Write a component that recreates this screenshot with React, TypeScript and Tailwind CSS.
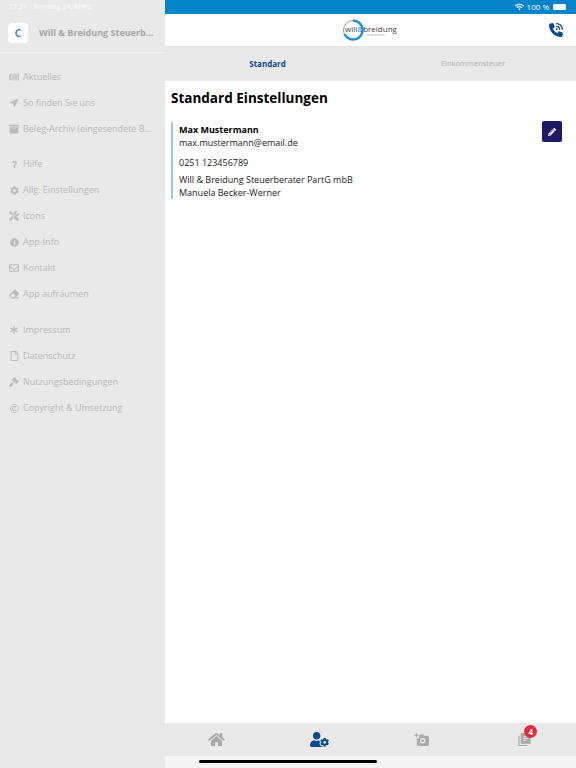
import React from 'react';
import {
  FaRegNewspaper,
  FaLocationArrow,
  FaArchive,
  FaQuestion,
  FaCog,
  FaTools,
  FaInfoCircle,
  FaRegEnvelope,
  FaEraser,
  FaAsterisk,
  FaRegFile,
  FaGavel,
  FaRegCopyright,
  FaUserCog,
  FaHome,
  FaPencilAlt,
  FaWifi,
} from 'react-icons/fa';
import { FaPhoneVolume } from 'react-icons/fa6';

const menuGroups = [
  [
    { label: 'Aktuelles', icon: FaRegNewspaper, size: 'w-[10px] h-[10px]' },
    { label: 'So finden Sie uns', icon: FaLocationArrow, size: 'w-[8px] h-[8px]' },
    { label: 'Beleg-Archiv (eingesendete Belege)', icon: FaArchive, size: 'w-[10px] h-[10px]' },
  ],
  [
    { label: 'Hilfe', icon: FaQuestion, size: 'w-[7px] h-[7px]' },
    { label: 'Allg. Einstellungen', icon: FaCog, size: 'w-[9px] h-[9px]' },
    { label: 'Icons', icon: FaTools, size: 'w-[10px] h-[10px]' },
    { label: 'App-Info', icon: FaInfoCircle, size: 'w-[9px] h-[9px]' },
    { label: 'Kontakt', icon: FaRegEnvelope, size: 'w-[10px] h-[10px]' },
    { label: 'App aufräumen', icon: FaEraser, size: 'w-[10px] h-[10px]' },
  ],
  [
    { label: 'Impressum', icon: FaAsterisk, size: 'w-[8px] h-[8px]' },
    { label: 'Datenschutz', icon: FaRegFile, size: 'w-[9px] h-[10px]' },
    { label: 'Nutzungsbedingungen', icon: FaGavel, size: 'w-[10px] h-[10px]' },
    { label: 'Copyright & Umsetzung', icon: FaRegCopyright, size: 'w-[9px] h-[9px]' },
  ],
];

const Sidebar: React.FC = () => (
  <div className="w-[165px] shrink-0 h-full bg-[#e9e9e9] flex flex-col">
    <div className="h-[14px] flex items-center pl-[9px] gap-[6px] text-[7px] font-semibold text-[#f7f7f7]">
      <span>17:31</span>
      <span>Sonntag 24. März</span>
    </div>
    <div className="h-[39px] flex items-center pl-[8px] pr-[11px] border-b border-[#f4f4f4]">
      <div className="w-[20px] h-[20px] shrink-0 bg-white rounded-[4px] flex items-center justify-center text-[#3f8fc4] text-[11px] font-bold">
        C
      </div>
      <div className="ml-[11px] text-[9px] font-bold text-[#a6a6a6] truncate">
        Will &amp; Breidung Steuerberater PartG mbB
      </div>
    </div>
    <div className="pt-[11px] flex flex-col gap-[10px]">
      {menuGroups.map((group, i) => (
        <div key={i} className="flex flex-col first:-mb-px">
          {group.map(item => (
            <div key={item.label} className="h-[26px] flex items-center pl-[9px] pr-[13px] text-[#b8b8b8]">
              <span className="w-[10px] shrink-0 flex justify-center">
                <item.icon className={`${item.size} text-[#bcbcbc]`} />
              </span>
              <span className="ml-[4px] text-[9px] truncate">{item.label}</span>
            </div>
          ))}
        </div>
      ))}
    </div>
  </div>
);

const Logo: React.FC = () => (
  <div className="flex items-center">
    <svg width="22" height="22" viewBox="0 0 22 22" className="-mr-[19px]">
      <circle cx="11" cy="11" r="9.500" fill="none" stroke="#9a9a9a" strokeWidth="1" />
      <path d="M11 1.500A9.500 9.500 0 1 1 2.500 15" fill="none" stroke="#1f8fd0" strokeWidth="2.400" />
    </svg>
    <div className="flex flex-col items-center leading-none">
      <span className="text-[8px] text-[#444444] leading-[9px]">
        will<span className="text-[#1f8fd0]">&amp;</span>breidung
      </span>
      <span className="text-[3px] text-[#999999] leading-[4px] pl-[10px]">steuerberater</span>
    </div>
  </div>
);

const CameraPlus: React.FC = () => (
  <svg width="15" height="13" viewBox="0 0 16 14" fill="#a9a9a9">
    <path d="M2 0h1v2h2v1H3v2H2V3H0V2h2z" />
    <path fillRule="evenodd" d="M6 1.500h4l.8 1.500h3.700a1.500 1.500 0 0 1 1.500 1.500v8a1.500 1.500 0 0 1-1.500 1.500h-10A1.500 1.500 0 0 1 3 12.500V6h2.200zM9.300 5.300a3 3 0 1 0 0 6 3 3 0 0 0 0-6zm0 1.500a1.500 1.500 0 1 1 0 3 1.500 1.500 0 0 1 0-3z" />
  </svg>
);

const Notes: React.FC = () => (
  <svg width="13" height="15" viewBox="0 0 14 15" fill="none" stroke="#a9a9a9" strokeWidth="1.200">
    <path d="M1 3.500v10.500h9" />
    <path d="M3.500 1h9.500v10.500h-9.500z" fill="#a9a9a9" />
    <path d="M5.500 4.500h5.500M5.500 6.500h5.500M5.500 8.500h3.500" stroke="#e9e9e9" strokeWidth="0.900" />
  </svg>
);

const App: React.FC = () => (
  <div className="w-[576px] h-[768px] flex overflow-hidden bg-white font-['Open_Sans',sans-serif]">
    <Sidebar />
    <div className="flex-1 h-full flex flex-col relative">
      <div className="h-[14px] bg-[#0684c8] flex items-center justify-end pr-[10px] gap-[3px] text-[8px] text-white">
        <FaWifi className="w-[9px] h-[8px]" />
        <span>100 %</span>
        <div className="w-[13px] h-[6px] bg-white rounded-[1.500px] ml-[1px]" />
      </div>
      <div className="h-[33px] bg-white flex items-center border-b border-[#e2e2e2] relative">
        <div className="flex-1 flex justify-center pr-[2px]">
          <Logo />
        </div>
        <FaPhoneVolume className="absolute right-[13px] top-[9px] w-[14px] h-[14px] text-[#0b4a8f]" />
      </div>
      <div className="h-[34px] bg-[#e9e9e9] flex">
        <div className="w-[205px] flex items-center justify-center font-bold text-[8px] text-[#0b4a8f]">Standard</div>
        <div className="flex-1 flex items-center justify-center text-[7.5px] text-[#b0b0b0]">Einkommensteuer</div>
      </div>
      <div className="flex-1 px-[6px] pt-[6px]">
        <h1 className="text-[13.500px] font-bold text-black leading-[22px]">Standard Einstellungen</h1>
        <div className="mt-[13px] border-l-2 border-[#8ecbef] pl-[6px] relative text-[9px] text-[#222222] leading-[13px]">
          <div className="font-bold text-black pt-[1px]">Max Mustermann</div>
          <div>max.mustermann@email.de</div>
          <div className="mt-[7px]">0251 123456789</div>
          <div className="mt-[4px]">Will &amp; Breidung Steuerberater PartG mbB</div>
          <div>Manuela Becker-Werner</div>
          <div className="absolute right-[8px] -top-[1px] w-[20px] h-[21px] rounded-[2px] bg-[#1f1a66] flex items-center justify-center">
            <FaPencilAlt className="w-[8px] h-[8px] text-white" />
          </div>
        </div>
      </div>
      <div className="h-[33px] bg-[#e9e9e9] flex items-center">
        <div className="flex-1 flex justify-center">
          <FaHome className="w-[17px] h-[15px] text-[#a9a9a9]" />
        </div>
        <div className="flex-1 flex justify-center">
          <FaUserCog className="w-[19px] h-[15px] text-[#0b4a8f]" />
        </div>
        <div className="flex-1 flex justify-center">
          <CameraPlus />
        </div>
        <div className="flex-1 flex justify-center relative">
          <Notes />
          <div className="absolute left-[51px] -top-[7px] w-[13px] h-[13px] rounded-full bg-[#e22b3f] flex items-center justify-center text-[8px] font-bold text-white">
            4
          </div>
        </div>
      </div>
      <div className="h-[12px] bg-[#f4f4f4]" />
    </div>
    <div className="absolute left-[199px] top-[760px] w-[178px] h-[3px] rounded-full bg-black" />
  </div>
);

export default App;
